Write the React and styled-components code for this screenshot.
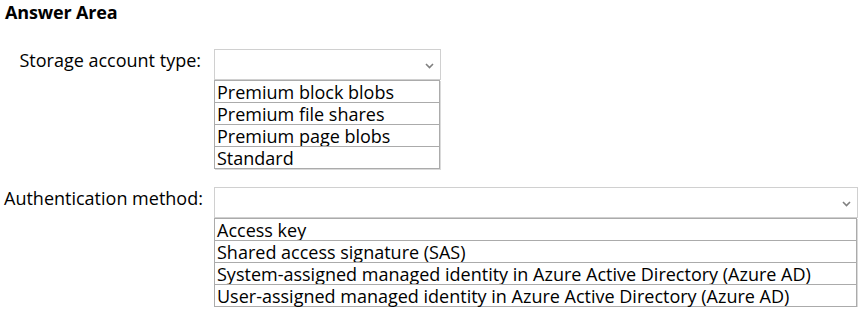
import React from 'react';
import styled, { createGlobalStyle } from 'styled-components';

const GlobalStyle = createGlobalStyle`
  body {
    margin: 0;
    background: #ffffff;
    font-family: "Open Sans", "Noto Sans", "Liberation Sans", sans-serif;
    color: #000000;
  }
`;

const questions = [
  {
    label: 'Storage account type:',
    width: 227,
    options: ['Premium block blobs', 'Premium file shares', 'Premium page blobs', 'Standard'],
  },
  {
    label: 'Authentication method:',
    width: 644,
    options: [
      'Access key',
      'Shared access signature (SAS)',
      'System-assigned managed identity in Azure Active Directory (Azure AD)',
      'User-assigned managed identity in Azure Active Directory (Azure AD)',
    ],
  },
];

function Chevron() {
  return (
    <svg width="9" height="6" viewBox="0 0 9 6">
      <path d="M1 1 L4.5 4.5 L8 1" fill="none" stroke="#808080" strokeWidth="1.6" />
    </svg>
  );
}

function App() {
  return (
    <>
      <GlobalStyle />
      <Page>
        <Title>Answer Area</Title>
        <Form>
          {questions.map((q) => (
            <Question key={q.label}>
              <Label>{q.label}</Label>
              <Dropdown $width={q.width}>
                <SelectBox>
                  <Chevron />
                </SelectBox>
                <OptionList>
                  {q.options.map((o) => (
                    <Option key={o}>{o}</Option>
                  ))}
                </OptionList>
              </Dropdown>
            </Question>
          ))}
        </Form>
      </Page>
    </>
  );
}

const Page = styled.div`
  padding: 0 0 0 4px;
`;

const Title = styled.h1`
  margin: 0 0 0 1px;
  font-size: 18px;
  font-weight: 700;
  line-height: 25px;
  letter-spacing: -0.15px;
`;

const Form = styled.div`
  display: flex;
  flex-direction: column;
  gap: 18px;
  margin-top: 24px;
`;

const Question = styled.div`
  display: grid;
  grid-template-columns: 197px auto;
  column-gap: 13px;
  align-items: start;
`;

const Label = styled.div`
  text-align: right;
  font-size: 18px;
  line-height: 22px;
  white-space: nowrap;
`;

const Dropdown = styled.div`
  width: ${(p) => p.$width}px;
`;

const SelectBox = styled.div`
  box-sizing: border-box;
  height: 31px;
  border: 1px solid #d0d0d0;
  display: flex;
  align-items: center;
  justify-content: flex-end;
  padding-right: 6px;
  padding-top: 2px;
`;

const OptionList = styled.div`
  display: flex;
  flex-direction: column;
  border: 1px solid #ababab;
  border-top: none;
  margin-right: 1px;
  box-shadow: 1px 1px 0 #dadada;
`;

const Option = styled.div`
  border-top: 1px solid #ababab;
  height: 21px;
  line-height: 22px;
  padding-left: 2px;
  font-size: 18px;
  white-space: nowrap;
`;

export default App;
